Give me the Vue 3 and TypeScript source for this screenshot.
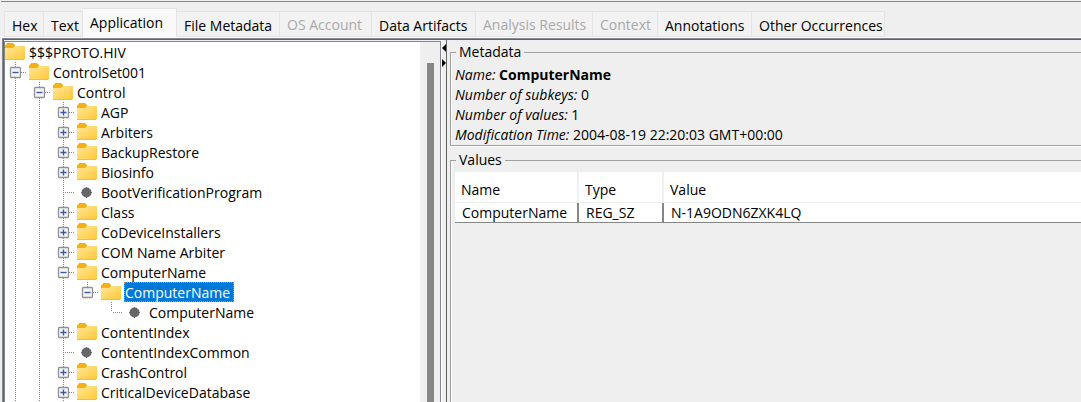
<script setup lang="ts">
import { computed, ref } from 'vue'

interface Tab {
  label: string
  disabled?: boolean
}

interface TreeNode {
  id: number
  depth: number
  label: string
  leaf?: boolean
  open?: boolean
  last?: boolean
}

const tabs: Tab[] = [
  { label: 'Hex' },
  { label: 'Text' },
  { label: 'Application' },
  { label: 'File Metadata' },
  { label: 'OS Account', disabled: true },
  { label: 'Data Artifacts' },
  { label: 'Analysis Results', disabled: true },
  { label: 'Context', disabled: true },
  { label: 'Annotations' },
  { label: 'Other Occurrences' },
]
const activeTab = ref('Application')

const nodes = ref<TreeNode[]>([
  { id: 0, depth: 0, label: '$$$PROTO.HIV', open: true },
  { id: 1, depth: 1, label: 'ControlSet001', open: true },
  { id: 2, depth: 2, label: 'Control', open: true },
  { id: 3, depth: 3, label: 'AGP' },
  { id: 4, depth: 3, label: 'Arbiters' },
  { id: 5, depth: 3, label: 'BackupRestore' },
  { id: 6, depth: 3, label: 'Biosinfo' },
  { id: 7, depth: 3, label: 'BootVerificationProgram', leaf: true },
  { id: 8, depth: 3, label: 'Class' },
  { id: 9, depth: 3, label: 'CoDeviceInstallers' },
  { id: 10, depth: 3, label: 'COM Name Arbiter' },
  { id: 11, depth: 3, label: 'ComputerName', open: true },
  { id: 12, depth: 4, label: 'ComputerName', open: true, last: true },
  { id: 13, depth: 5, label: 'ComputerName', leaf: true, last: true },
  { id: 14, depth: 3, label: 'ContentIndex' },
  { id: 15, depth: 3, label: 'ContentIndexCommon', leaf: true },
  { id: 16, depth: 3, label: 'CrashControl' },
  { id: 17, depth: 3, label: 'CriticalDeviceDatabase' },
])
const selectedId = ref(12)

const visibleNodes = computed(() => {
  const out: TreeNode[] = []
  let hiddenBelow = Infinity
  for (const n of nodes.value) {
    if (n.depth > hiddenBelow) continue
    hiddenBelow = n.leaf || n.open ? Infinity : n.depth
    out.push(n)
  }
  return out
})

// The three outer levels have siblings further down, so their line goes on.
const hasLine = (level: number) => level <= 3

const metadata = [
  { key: 'Name:', value: 'ComputerName', strong: true },
  { key: 'Number of subkeys:', value: '0' },
  { key: 'Number of values:', value: '1' },
  { key: 'Modification Time:', value: '2004-08-19 22:20:03 GMT+00:00' },
]

const values = [{ name: 'ComputerName', type: 'REG_SZ', value: 'N-1A9ODN6ZXK4LQ' }]
</script>

<template>
  <div class="viewer">
    <nav class="tabs" role="tablist" aria-label="Content viewers">
      <button
        v-for="t in tabs"
        :key="t.label"
        type="button"
        role="tab"
        class="tab"
        :class="{ active: t.label === activeTab }"
        :aria-selected="t.label === activeTab"
        :disabled="t.disabled"
        @click="activeTab = t.label"
      >{{ t.label }}</button>
    </nav>

    <main class="content">
      <section class="tree-pane">
        <ul class="tree" role="tree" aria-label="Registry keys">
          <li
            v-for="n in visibleNodes"
            :key="n.id"
            class="row"
            role="treeitem"
            :aria-level="n.depth + 1"
            :aria-selected="n.id === selectedId"
          >
            <template v-for="level in n.depth" :key="level">
              <span v-if="level < n.depth" class="slot" :class="{ line: hasLine(level) }"></span>
              <span v-else class="slot branch" :class="n.last ? 'half' : 'line'">
                <button
                  v-if="!n.leaf"
                  type="button"
                  class="expander"
                  :aria-label="(n.open ? 'Collapse ' : 'Expand ') + n.label"
                  @click="n.open = !n.open"
                >
                  <svg width="11" height="11" viewBox="0 0 11 11">
                    <rect x="0.5" y="0.5" width="10" height="10" rx="1" fill="#f4f4f4" stroke="#919191" stroke-width="1.3" />
                    <path :d="n.open ? 'M2.5 5.5H8.500' : 'M2.5 5.5H8.500M5.5 2.500V8.500'" stroke="#3a55b0" stroke-width="1.3" />
                  </svg>
                </button>
              </span>
            </template>
            <svg v-if="n.leaf" class="icon" width="20" height="20" viewBox="0 0 20 20" aria-hidden="true">
              <circle cx="9.5" cy="10.5" r="5" fill="#666" />
              <path d="M9.5 5v11M4 10.500h11" stroke="#666" />
            </svg>
            <svg v-else class="icon" width="20" height="20" viewBox="0 0 20 20" aria-hidden="true">
              <defs>
                <linearGradient id="folder-face" x1="0" y1="0" x2="1" y2="1">
                  <stop offset="0" stop-color="#ffe79b" />
                  <stop offset="1" stop-color="#ffc937" />
                </linearGradient>
              </defs>
              <path d="M0 3H1L2 1H8L10 3V7H0z" fill="#f4b014" />
              <path d="M0 6H8L10 4H20V17H0z" fill="url(#folder-face)" />
              <path d="M0 17.500H19" stroke="#f0bd48" />
            </svg>
            <button
              type="button"
              class="label"
              :class="{ selected: n.id === selectedId }"
              @click="selectedId = n.id"
            >{{ n.label }}</button>
          </li>
        </ul>
        <div class="scrollbar"><div class="thumb"></div></div>
      </section>

      <div class="splitter">
        <button type="button" aria-label="Collapse left pane">
          <svg width="4" height="8" viewBox="0 0 4 8"><path d="M4 0V8L0 4z" /></svg>
        </button>
        <button type="button" aria-label="Collapse right pane">
          <svg width="4" height="8" viewBox="0 0 4 8"><path d="M0 0V8L4 4z" /></svg>
        </button>
      </div>

      <section class="details">
        <fieldset class="group">
          <legend>Metadata</legend>
          <p v-for="m in metadata" :key="m.key">
            <em>{{ m.key }}</em>&#32;<strong v-if="m.strong">{{ m.value }}</strong><span v-else>{{ m.value }}</span>
          </p>
        </fieldset>
        <fieldset class="group values">
          <legend>Values</legend>
          <table>
            <colgroup>
              <col class="c-name" />
              <col class="c-type" />
              <col />
            </colgroup>
            <thead>
              <tr><th scope="col">Name</th><th scope="col">Type</th><th scope="col">Value</th></tr>
            </thead>
            <tbody>
              <tr v-for="v in values" :key="v.name">
                <td>{{ v.name }}</td><td>{{ v.type }}</td><td>{{ v.value }}</td>
              </tr>
            </tbody>
          </table>
        </fieldset>
      </section>
    </main>
  </div>
</template>

<style>
body {
  background: #efefef;
  overflow: hidden;
}
</style>

<style scoped>
.viewer {
  box-sizing: border-box;
  height: 100vh;
  display: flex;
  flex-direction: column;
  padding: 1px 0 0 1px;
  font: 14px/20px "Open Sans", "Noto Sans", sans-serif;
  color: #000;
  background: #efefef;
}
button {
  font: inherit;
  color: inherit;
  border: 0;
  padding: 0;
  margin: 0;
  background: none;
}
.tabs {
  display: grid;
  grid-template-columns: 40px 39px 94px 103px 92px 104px 117px 65px 94px 133px;
  align-items: end;
  height: 35px;
  padding-left: 3px;
  border-top: 1px solid #878787;
  border-bottom: 1px solid #fff;
  flex: none;
}
.tab {
  box-sizing: border-box;
  height: 26px;
  padding: 4px 0 0 7px;
  text-align: left;
  white-space: nowrap;
  background: #f2f2f2;
  border: 1px solid #e3e3e3;
  border-left: 0;
}
.tab:first-child {
  border-left: 1px solid #e3e3e3;
}
.tab.active {
  height: 29px;
  padding: 0 0 0 7px;
  background: #f9f9f9;
  border-bottom-color: #f9f9f9;
}
.tab:disabled {
  color: #a9a9a9;
  padding-top: 2px;
}
.content {
  flex: 1;
  min-height: 0;
  display: flex;
  margin-left: 1px;
  border-top: 1px solid #828790;
  border-left: 1px solid #828790;
  box-shadow: inset 1px 1px 0 #646464;
}
.tree-pane {
  display: flex;
  flex: 0 1 435px;
  margin: 2px 0 0 1px;
  border: 1px solid #828790;
  border-bottom: 0;
  background: #fff;
}
.tree {
  flex: 1;
  margin: 0;
  padding: 0;
  list-style: none;
  overflow: hidden;
}
.row {
  display: flex;
  height: 20px;
}
.slot {
  position: relative;
  flex: none;
  width: 24px;
}
.line,
.half {
  background: repeating-linear-gradient(#868686 0 1px, transparent 1px 2px) 10px 0 / 1px 100% no-repeat;
}
.half {
  background-size: 1px 10px;
}
.branch::after {
  content: "";
  position: absolute;
  left: 12px;
  right: 3px;
  top: 10px;
  height: 1px;
  background: repeating-linear-gradient(90deg, #868686 0 1px, transparent 1px 2px);
}
.expander {
  position: absolute;
  z-index: 1;
  left: 5px;
  top: 5px;
  display: block;
  line-height: 0;
}
.expander svg,
.splitter svg {
  display: block;
  overflow: visible;
}
.icon {
  flex: none;
  display: block;
}
.label {
  box-sizing: border-box;
  margin-left: 3px;
  padding: 2px 3px 0 0;
  border: 1px solid transparent;
  line-height: 16px;
  white-space: nowrap;
}
.label.selected {
  color: #fff;
  background: #0078d7;
  border: 1px dotted #ff8728;
}
.scrollbar {
  flex: none;
  width: 20px;
  background: #efefef;
  display: flex;
  justify-content: center;
  padding-top: 21px;
  box-sizing: border-box;
}
.thumb {
  width: 7px;
  background: #868686;
}
.splitter {
  flex: none;
  box-sizing: border-box;
  width: 6px;
  margin-top: 1px;
  padding-top: 4px;
  display: flex;
  flex-direction: column;
  gap: 7px;
  border-left: 1px solid #fff;
  border-right: 1px solid #646464;
}
.splitter button {
  display: block;
  line-height: 0;
}
.details {
  flex: 1;
  min-width: 0;
  display: flex;
  flex-direction: column;
  gap: 4px;
  padding: 3px 0 0 3px;
}
.group {
  margin: 0;
  min-width: 0;
  padding: 3px 0 0 4px;
  border: 1px solid #a0a0a0;
  border-right: 0;
  box-shadow: inset 1px 0 0 #fff, 0 1px 0 #fff;
}
.values {
  flex: 1;
  padding-top: 2px;
  border-bottom: 0;
}
legend {
  margin-left: 1px;
  padding: 0 3px;
}
p {
  margin: 0;
  white-space: nowrap;
}
table {
  width: 100%;
  table-layout: fixed;
  border-collapse: separate;
  border-spacing: 0;
  background: #fff;
}
.c-name {
  width: 124px;
}
.c-type {
  width: 85px;
}
th,
td {
  box-sizing: border-box;
  padding: 0 0 0 6px;
  text-align: left;
  font-weight: 400;
  white-space: nowrap;
}
th {
  height: 31px;
  padding-top: 5px;
  border-right: 2px solid #efefef;
  border-bottom: 1px solid #efefef;
}
td {
  height: 20px;
  line-height: 19px;
  padding-left: 7px;
  border-right: 2px solid #868686;
  border-bottom: 1px solid #868686;
}
th:last-child,
td:last-child {
  border-right: 0;
}
</style>
